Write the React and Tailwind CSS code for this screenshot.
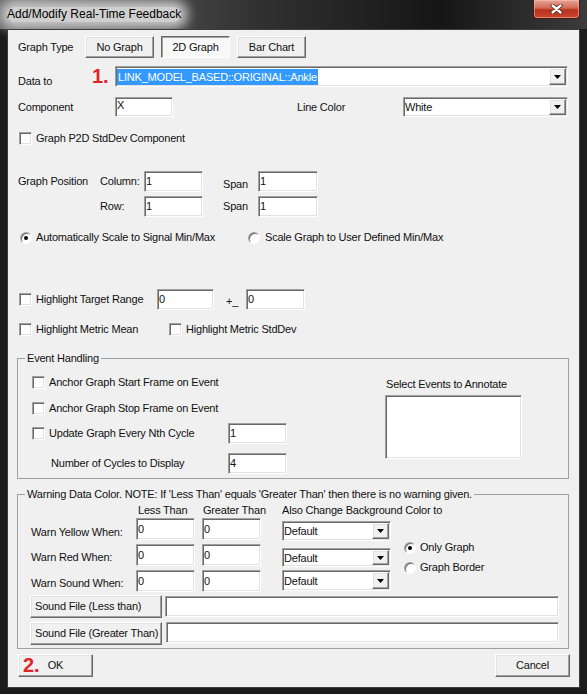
import React from 'react';

// classic win32 3D edges
const raised = "border border-t-white border-l-white border-r-[#696969] border-b-[#696969] bg-[#f0f0f0] shadow-[inset_-1px_-1px_0_#a0a0a0,inset_1px_1px_0_#e3e3e3]";
const sunken = "border border-t-[#a0a0a0] border-l-[#a0a0a0] border-r-white border-b-white bg-white shadow-[inset_1px_1px_0_#696969,inset_-1px_-1px_0_#e3e3e3]";

const Field = ({ className = "", value = "" }) => (
    <div className={`${sunken} ${className} shrink-0 pl-[1px] flex items-center leading-[13px]`}>{value}</div>
);

const Combo = ({ className = "", children }) => (
    <div className={`${sunken} ${className} shrink-0 flex`}>
        <div className="flex-1 min-w-0 pl-[1px] flex items-center leading-[16px] whitespace-nowrap overflow-hidden">{children}</div>
        <div className={`${raised} w-[17px] m-[1px] flex items-center justify-center`}>
            <svg width="7" height="4" viewBox="0 0 7 4"><path d="M0 0h7L3.5 4z" fill="#000" /></svg>
        </div>
    </div>
);

const Check = () => <div className={`w-[13px] h-[13px] shrink-0 ${sunken}`} />;

const Radio = ({ on }) => (
    <div className="w-[12px] h-[12px] shrink-0 rounded-full border border-t-[#a0a0a0] border-l-[#a0a0a0] border-r-white border-b-white bg-white shadow-[inset_1px_1px_0_#696969] flex items-center justify-center">
        {on && <div className="w-[4px] h-[4px] rounded-full bg-black" />}
    </div>
);

const Btn = ({ className = "", children }) => (
    <div className={`${raised} ${className} shrink-0 flex items-center justify-center whitespace-nowrap`}>{children}</div>
);

const App = () => {
    const warnRows = [
        { label: "Warn Yellow When:", pt: "pt-[8px]" },
        { label: "Warn Red When:", pt: "pt-[7px]" },
        { label: "Warn Sound When:", pt: "pt-[7px]" },
    ];

    return (
        <div className="w-[587px] h-[694px] bg-[#1c1c1c] font-['Liberation_Sans',Arial,sans-serif] text-[11px] leading-[13px] tracking-[-0.2px] text-[#111] flex flex-col overflow-hidden">
            {/* Barra de título */}
            <div className="h-[29px] shrink-0 flex items-start justify-between bg-[linear-gradient(to_right,#6a6a6a,#303030_45%,#161616_75%,#3c3c3c)]">
                <span className="ml-[7px] mt-[7px] text-[12px] leading-[15px] tracking-normal text-black bg-[#cfcfcf] rounded-[8px] shadow-[0_0_12px_7px_#c8c8c8]">
                    Add/Modify Real-Time Feedback
                </span>
                <div className="mr-[7px] w-[47px] h-[19px] rounded-b-[4px] border border-t-0 border-[#4a1810] bg-[linear-gradient(to_bottom,#e7a694,#cf6a55_45%,#b8321d_55%,#c9462e)] flex items-center justify-center shadow-[inset_0_0_0_1px_rgba(255,200,190,0.5)]">
                    <svg width="13" height="10" viewBox="0 0 13 10">
                        <path d="M2.5 1.5l8 7M10.5 1.5l-8 7" stroke="#4a1a12" strokeWidth="4" strokeLinecap="round" />
                        <path d="M2.5 1.5l8 7M10.5 1.5l-8 7" stroke="#fff" strokeWidth="2.4" strokeLinecap="round" />
                    </svg>
                </div>
            </div>

            {/* Área cliente */}
            <div className="mx-[7px] h-[659px] shrink-0 border border-[#3d3d3d] bg-[#f0f0f0] pl-[10px] flex flex-col">
                {/* Graph Type */}
                <div className="mt-[6px] h-[22px] flex items-center">
                    <span className="w-[67px]">Graph Type</span>
                    <Btn className="w-[69px] h-[22px]">No Graph</Btn>
                    <div className="ml-[7px] w-[69px] h-[22px] shrink-0 flex items-center justify-center border border-t-[#696969] border-l-[#696969] border-r-white border-b-white bg-[#f8f8f8] shadow-[inset_1px_1px_0_#a0a0a0]">2D Graph</div>
                    <Btn className="ml-[7px] w-[69px] h-[22px]">Bar Chart</Btn>
                </div>

                {/* Data to */}
                <div className="mt-[8px] h-[21px] flex items-start">
                    <span className="w-[74px] pt-[9px]">Data to</span>
                    <span className="w-[23px] text-[20px] font-bold leading-[21px] tracking-normal text-[#e0252a]">1.</span>
                    <Combo className="w-[453px] h-[21px]">
                        <span className="inline-block px-[1px] bg-[#3399ff] text-white leading-[16px]">LINK_MODEL_BASED::ORIGINAL::Ankle</span>
                    </Combo>
                </div>

                {/* Component / Line Color */}
                <div className="mt-[10px] h-[20px] flex items-start">
                    <span className="w-[97px] pt-[4px]">Component</span>
                    <Field className="w-[58px] h-[20px] !items-start pt-[1px]" value="X" />
                    <span className="ml-[124px] w-[106px] pt-[4px]">Line Color</span>
                    <Combo className="w-[165px] h-[20px]">White</Combo>
                </div>

                {/* P2D */}
                <div className="mt-[15px] h-[13px] flex items-center">
                    <div className="ml-[1px]"><Check /></div>
                    <span className="ml-[4px]">Graph P2D StdDev Component</span>
                </div>

                {/* Graph Position */}
                <div className="mt-[26px] h-[21px] flex items-center">
                    <span className="w-[82px]">Graph Position</span>
                    <span className="w-[44px]">Column:</span>
                    <Field className="w-[59px] h-[21px]" value="1" />
                    <span className="ml-[20px] w-[35px] self-start pt-[7px]">Span</span>
                    <Field className="w-[60px] h-[21px]" value="1" />
                </div>
                <div className="mt-[4px] h-[21px] flex items-center">
                    <span className="ml-[82px] w-[44px]">Row:</span>
                    <Field className="w-[59px] h-[21px]" value="1" />
                    <span className="ml-[20px] w-[35px]">Span</span>
                    <Field className="w-[60px] h-[21px]" value="1" />
                </div>

                {/* Escalado */}
                <div className="mt-[14px] h-[13px] flex items-center">
                    <div className="w-[230px] flex items-center">
                        <div className="ml-[2px]"><Radio on /></div>
                        <span className="ml-[4px]">Automatically Scale to Signal Min/Max</span>
                    </div>
                    <Radio />
                    <span className="ml-[5px]">Scale Graph to User Defined Min/Max</span>
                </div>

                {/* Highlight Target Range */}
                <div className="mt-[45px] h-[21px] flex items-center">
                    <div className="w-[139px] flex items-center">
                        <div className="ml-[1px]"><Check /></div>
                        <span className="ml-[4px]">Highlight Target Range</span>
                    </div>
                    <Field className="w-[57px] h-[21px]" value="0" />
                    <span className="ml-[12px] w-[20px] pt-[3px]">+_</span>
                    <Field className="w-[59px] h-[21px]" value="0" />
                </div>

                <div className="mt-[13px] h-[13px] flex items-center">
                    <div className="w-[151px] flex items-center">
                        <div className="ml-[1px]"><Check /></div>
                        <span className="ml-[4px]">Highlight Metric Mean</span>
                    </div>
                    <Check />
                    <span className="ml-[4px]">Highlight Metric StdDev</span>
                </div>

                {/* Event Handling */}
                <fieldset className="mt-[16px] -ml-[1px] w-[552px] border border-[#a0a0a0] p-0 m-0 min-w-0">
                    <legend className="ml-[7px] px-[2px] leading-[13px]">Event Handling</legend>
                    <div className="flex pb-[4px]">
                        <div className="w-[270px] pl-[14px] flex flex-col">
                            <div className="mt-[11px] h-[13px] flex items-center">
                                <Check />
                                <span className="ml-[4px]">Anchor Graph Start Frame on Event</span>
                            </div>
                            <div className="mt-[13px] h-[13px] flex items-center">
                                <Check />
                                <span className="ml-[4px]">Anchor Graph Stop Frame on Event</span>
                            </div>
                            <div className="mt-[8px] h-[21px] flex items-center">
                                <div className="w-[196px] flex items-center">
                                    <Check />
                                    <span className="ml-[4px]">Update Graph Every Nth Cycle</span>
                                </div>
                                <Field className="w-[59px] h-[21px]" value="1" />
                            </div>
                            <div className="mt-[9px] h-[21px] flex items-center">
                                <span className="w-[196px] pl-[19px]">Number of Cycles to Display</span>
                                <Field className="w-[59px] h-[21px]" value="4" />
                            </div>
                        </div>
                        <div className="ml-[97px] flex flex-col">
                            <span className="mt-[13px] pl-[1px]">Select Events to Annotate</span>
                            <div className={`${sunken} mt-[4px] w-[137px] h-[64px]`} />
                        </div>
                    </div>
                </fieldset>

                {/* Warning Data Color */}
                <fieldset className="mt-[9px] -ml-[1px] w-[552px] border border-[#a0a0a0] p-0 m-0 min-w-0">
                    <legend className="ml-[7px] px-[2px] leading-[13px] whitespace-nowrap">Warning Data Color. NOTE: If 'Less Than' equals 'Greater Than' then there is no warning given.</legend>
                    <div className="flex flex-col pb-[3px]">
                        <div className="mt-[3px] h-[13px] flex">
                            <span className="ml-[120px] w-[65px]">Less Than</span>
                            <span className="w-[79px]">Greater Than</span>
                            <span>Also Change Background Color to</span>
                        </div>
                        <div className="mt-[1px] flex">
                            <div className="flex flex-col gap-[4px]">
                                {warnRows.map(({ label, pt }) => (
                                    <div key={label} className="h-[22px] flex items-start">
                                        <span className={`w-[118px] pl-[13px] ${pt}`}>{label}</span>
                                        <Field className="w-[59px] h-[22px]" value="0" />
                                        <Field className="ml-[7px] w-[59px] h-[22px]" value="0" />
                                    </div>
                                ))}
                            </div>
                            <div className="ml-[21px] flex flex-col">
                                <Combo className="mt-[3px] w-[109px] h-[20px]">Default</Combo>
                                <Combo className="mt-[7px] w-[109px] h-[19px]">Default</Combo>
                                <Combo className="mt-[3px] w-[109px] h-[21px]">Default</Combo>
                            </div>
                            <div className="ml-[13px] flex flex-col">
                                <div className="mt-[23px] h-[13px] flex items-center">
                                    <Radio on />
                                    <span className="ml-[4px]">Only Graph</span>
                                </div>
                                <div className="mt-[7px] h-[13px] flex items-center">
                                    <Radio />
                                    <span className="ml-[4px]">Graph Border</span>
                                </div>
                            </div>
                        </div>
                        <div className="mt-[3px] pl-[12px] h-[23px] flex items-start">
                            <Btn className="w-[132px] h-[23px] !justify-start pl-[4px]">Sound File (Less than)</Btn>
                            <div className={`${sunken} ml-[3px] mt-[1px] w-[394px] h-[21px]`} />
                        </div>
                        <div className="mt-[4px] pl-[12px] h-[23px] flex items-start">
                            <Btn className="w-[132px] h-[23px] !justify-start pl-[4px] overflow-hidden">Sound File (Greater Than)</Btn>
                            <div className={`${sunken} ml-[4px] w-[393px] h-[21px]`} />
                        </div>
                    </div>
                </fieldset>

                {/* OK / Cancel */}
                <div className="mt-[5px] w-[552px] flex justify-between">
                    <Btn className="relative w-[75px] h-[23px]">
                        <span className="absolute left-[4px] top-[-1px] text-[20px] font-bold leading-[23px] tracking-normal text-[#e0252a]">2.</span>
                        OK
                    </Btn>
                    <Btn className="w-[75px] h-[23px]">Cancel</Btn>
                </div>
            </div>
        </div>
    );
};

export default App;
